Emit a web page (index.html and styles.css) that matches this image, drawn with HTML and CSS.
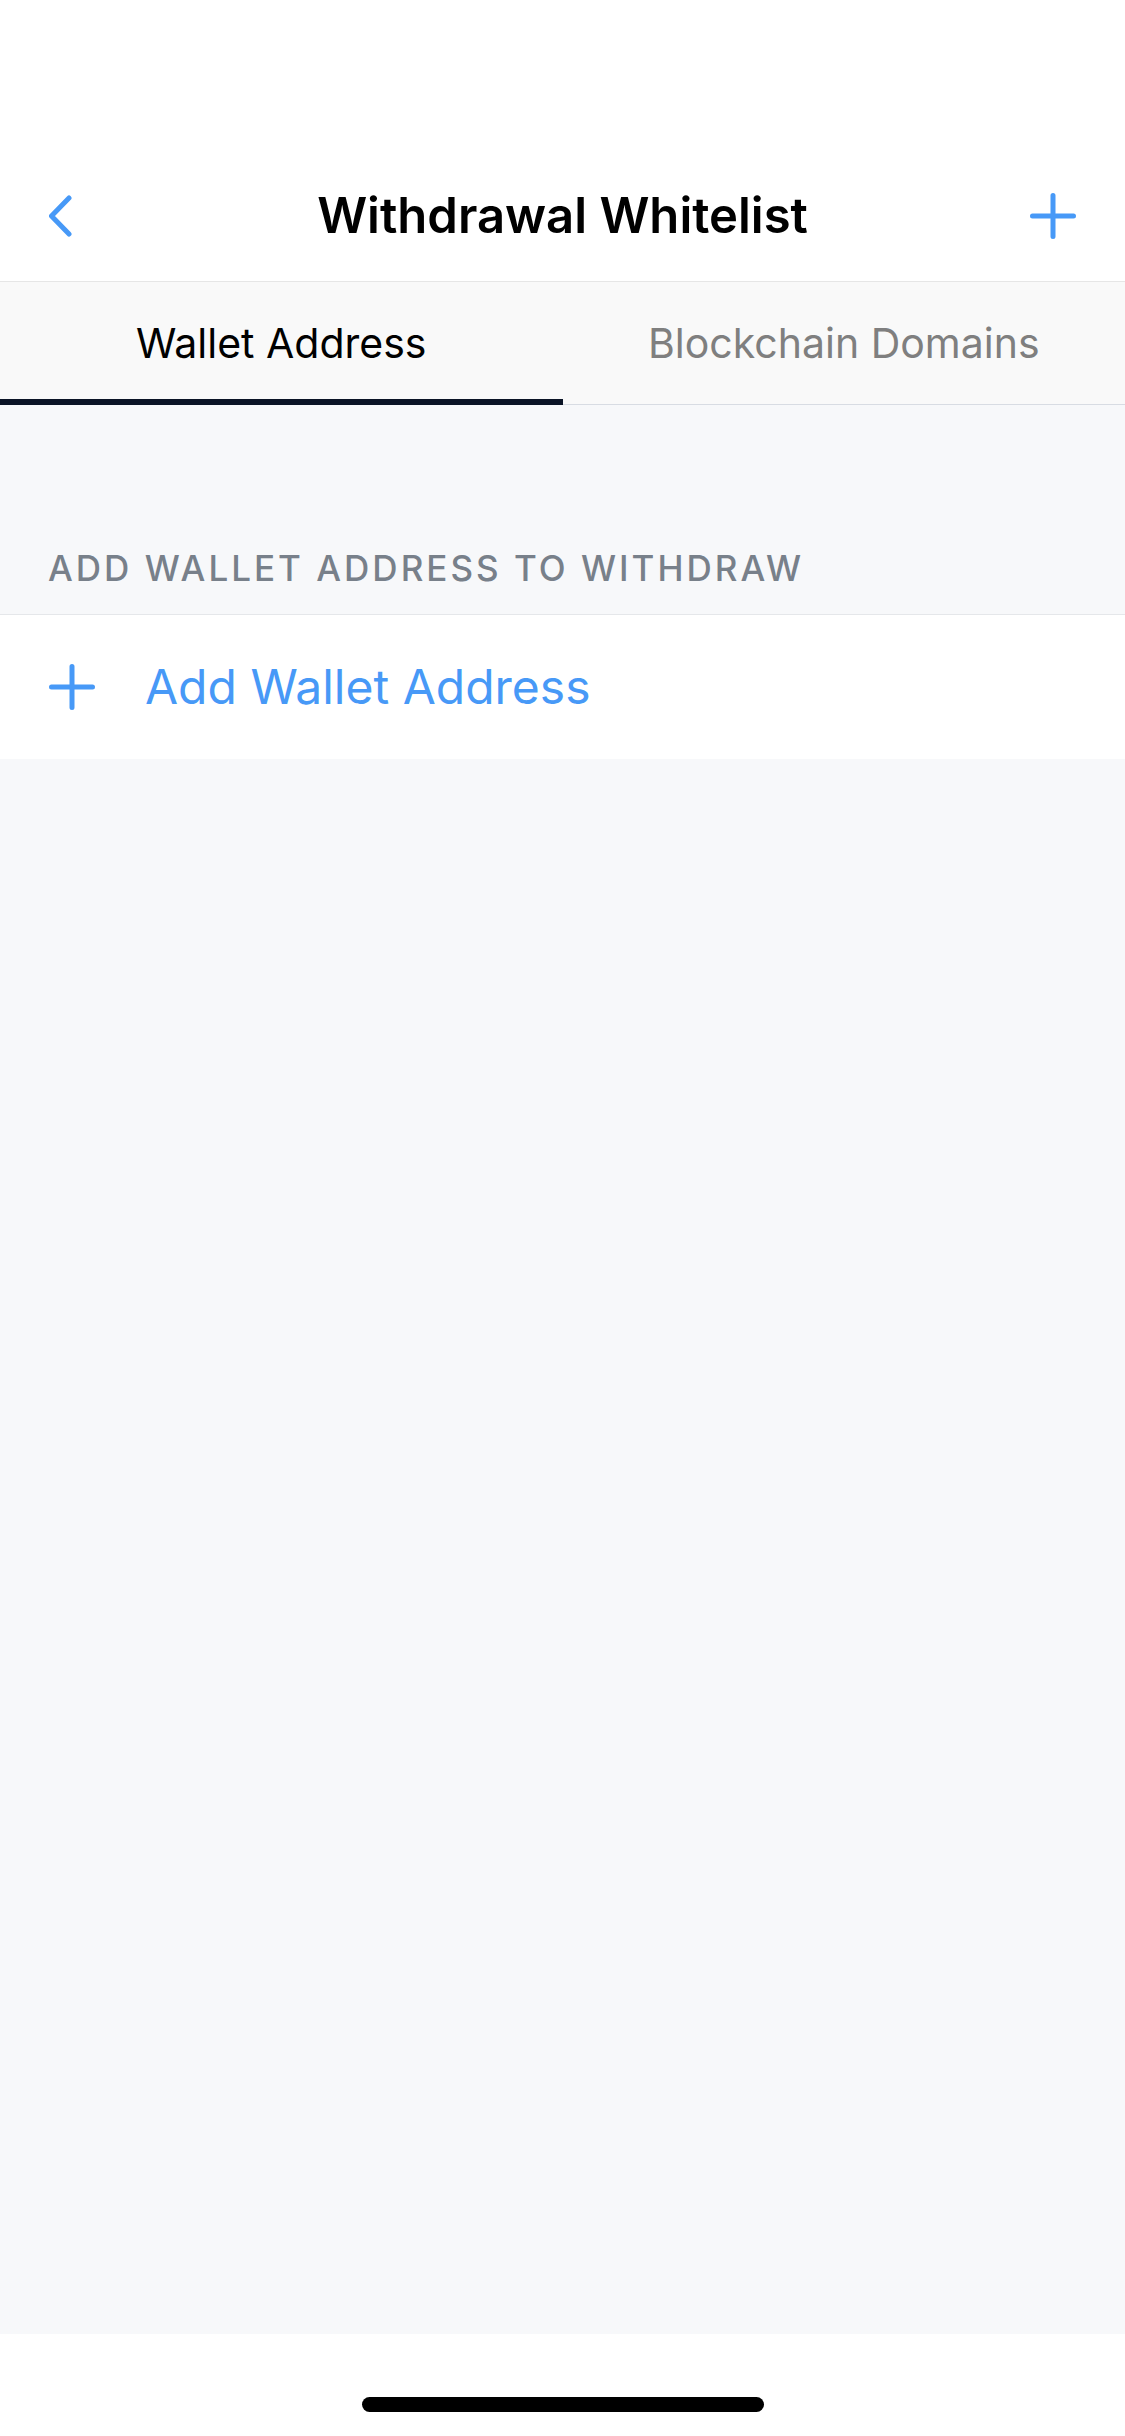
FILE: index.html
```html
<!DOCTYPE html>
<html lang="en">
<head>
<meta charset="utf-8">
<meta name="viewport" content="width=device-width, initial-scale=1">
<title>Withdrawal Whitelist</title>
<link rel="stylesheet" href="styles.css">
</head>
<body>
<div class="screen">
  <header class="nav">
    <button class="nav-button" type="button" aria-label="Back">
      <svg class="icon" viewBox="0 0 46 46"><path d="M20 5 2.500 23 20 41"/></svg>
    </button>
    <h1 class="nav-title">Withdrawal Whitelist</h1>
    <button class="nav-button" type="button" aria-label="Add">
      <svg class="icon" viewBox="0 0 46 46"><path d="M23 2.500v41M2.500 23h41"/></svg>
    </button>
  </header>
  <div class="tabs" role="tablist">
    <button class="tab tab-active" type="button" role="tab" aria-selected="true">Wallet Address</button>
    <button class="tab" type="button" role="tab" aria-selected="false">Blockchain Domains</button>
  </div>
  <main class="content">
    <h2 class="section-title">ADD WALLET ADDRESS TO WITHDRAW</h2>
    <button class="row" type="button">
      <svg class="icon" viewBox="0 0 46 46" aria-hidden="true"><path d="M23 2.500v41M2.500 23h41"/></svg>
      <span>Add Wallet Address</span>
    </button>
  </main>
  <footer class="home-area"><div class="home-bar"></div></footer>
</div>
</body>
</html>
```
FILE: styles.css
```css
* {
  box-sizing: border-box;
}

body {
  margin: 0;
  background: #fff;
  color: #000;
  font-family: Inter, "Liberation Sans", sans-serif;
}

button {
  margin: 0;
  padding: 0;
  border: 0;
  background: none;
  font: inherit;
  cursor: pointer;
}

.screen {
  display: flex;
  flex-direction: column;
  min-height: 100vh;
}

.nav {
  display: flex;
  align-items: center;
  justify-content: space-between;
  padding: 151px 49px 0;
  border-bottom: 1px solid #e6e6e6;
}

.nav-button {
  display: flex;
  align-items: center;
  height: 130px;
  color: #4799f7;
}

.nav-title {
  margin: 0;
  font-size: 49px;
  font-weight: 600;
  line-height: 64px;
}

.icon {
  display: block;
  flex: none;
  width: 46px;
  height: 46px;
  fill: none;
  stroke: currentColor;
  stroke-width: 5;
  stroke-linecap: round;
  stroke-linejoin: round;
}

.tabs {
  display: grid;
  grid-template-columns: 1fr 1fr;
  background: #f9f9f9;
  box-shadow: inset 0 -1px #d8dce3;
}

.tab {
  padding: 38px 0 33px;
  border-bottom: 6px solid transparent;
  color: #7f7f7f;
  font-size: 41px;
  line-height: 46px;
}

.tab-active {
  border-bottom-color: #0b1426;
  color: #000;
}

.content {
  flex: 1;
  padding-top: 140px;
  background: #f7f8fa;
}

.section-title {
  margin: 0;
  padding: 0 48px 23px;
  border-bottom: 1px solid #e5e7ea;
  color: #78808a;
  font-size: 35px;
  font-weight: 500;
  line-height: 46px;
  letter-spacing: 3px;
}

.row {
  display: flex;
  align-items: center;
  gap: 50px;
  width: 100%;
  padding: 40px 49px;
  background: #fff;
  color: #4799f7;
  font-size: 48px;
  line-height: 64px;
  text-align: left;
}

.home-area {
  display: flex;
  justify-content: center;
  padding: 63px 0 24px;
}

.home-bar {
  width: 402px;
  height: 15px;
  border-radius: 8px;
  background: #000;
}
```
